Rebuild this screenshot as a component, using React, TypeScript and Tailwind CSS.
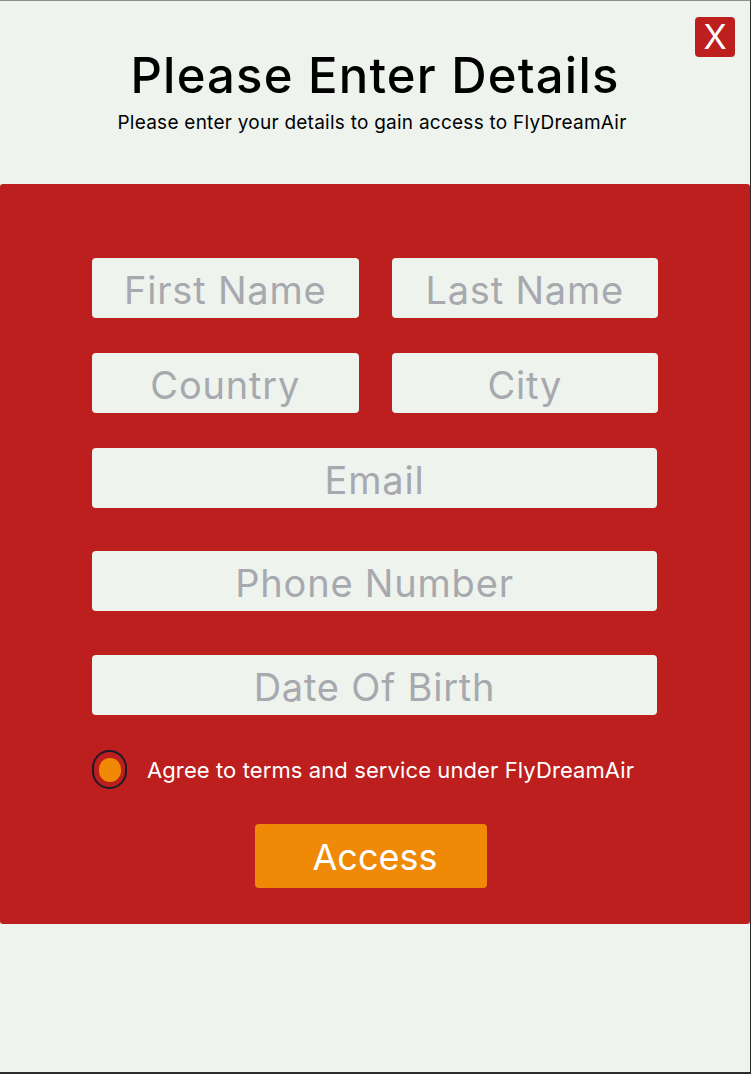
import React, { useState } from "react";

const font = { fontFamily: "Inter, 'Noto Sans', sans-serif" };

const Field: React.FC<{ placeholder: string; className?: string }> = ({
  placeholder,
  className = "",
}) => (
  <input
    type="text"
    placeholder={placeholder}
    className={`h-[60px] rounded-[4px] bg-[#eef3ee] pt-[3px] text-center text-[38px] tracking-[0.8px] text-[#41434b] placeholder-[#a7a9ae] outline-none ${className}`}
  />
);

const App: React.FC = () => {
  const [agreed, setAgreed] = useState<boolean>(true);

  return (
    <div
      style={font}
      className="relative flex h-[1074px] w-[751px] flex-col border-t border-r border-b-2 border-t-[#8c8c8c] border-r-[#2b2b2b] border-b-[#2b2b2b] bg-[#eef3ee]"
    >
      <button className="absolute right-[15px] top-[16px] flex h-[40px] w-[40px] items-center justify-center rounded-[4px] bg-[#bd1f1f] text-[34px] leading-none text-white">
        X
      </button>

      <div className="flex h-[183px] flex-col items-center pt-[48px]">
        <h1 className="text-[49px] leading-[54px] font-medium tracking-[1.2px] text-black">
          Please Enter Details
        </h1>
        <p className="mt-[8px] pr-[6px] text-[19px] leading-[24px] tracking-[0.25px] text-black">
          Please enter your details to gain access to FlyDreamAir
        </p>
      </div>

      <div className="flex h-[740px] w-[750px] flex-col rounded-[3px] bg-[#bd1f1f] px-[92px] pt-[74px]">
        <div className="grid grid-cols-2 gap-x-[33px] gap-y-[35px]">
          <Field placeholder="First Name" className="w-full" />
          <Field placeholder="Last Name" className="w-full" />
          <Field placeholder="Country" className="w-full" />
          <Field placeholder="City" className="w-full" />
        </div>
        <Field placeholder="Email" className="mt-[35px] w-[565px]" />
        <Field placeholder="Phone Number" className="mt-[43px] w-[565px]" />
        <Field placeholder="Date Of Birth" className="mt-[44px] w-[565px]" />

        <label className="mt-[35px] flex cursor-pointer items-center gap-[20px]">
          <span
            onClick={() => setAgreed(!agreed)}
            className="flex h-[39px] w-[35px] items-center justify-center rounded-full border-2 border-[#1c1a2a]"
          >
            {agreed && (
              <span className="h-[24px] w-[22px] rounded-full bg-[#f08a05]" />
            )}
          </span>
          <span className="pt-[2px] text-[22px] tracking-[0.1px] text-white">
            Agree to terms and service under FlyDreamAir
          </span>
        </label>

        <div className="mt-[35px] flex justify-center pr-[8px]">
          <button className="h-[64px] w-[232px] rounded-[4px] bg-[#f08906] pl-[8px] pt-[2px] text-[36px] text-white">
            Access
          </button>
        </div>
      </div>
    </div>
  );
};

export default App;
